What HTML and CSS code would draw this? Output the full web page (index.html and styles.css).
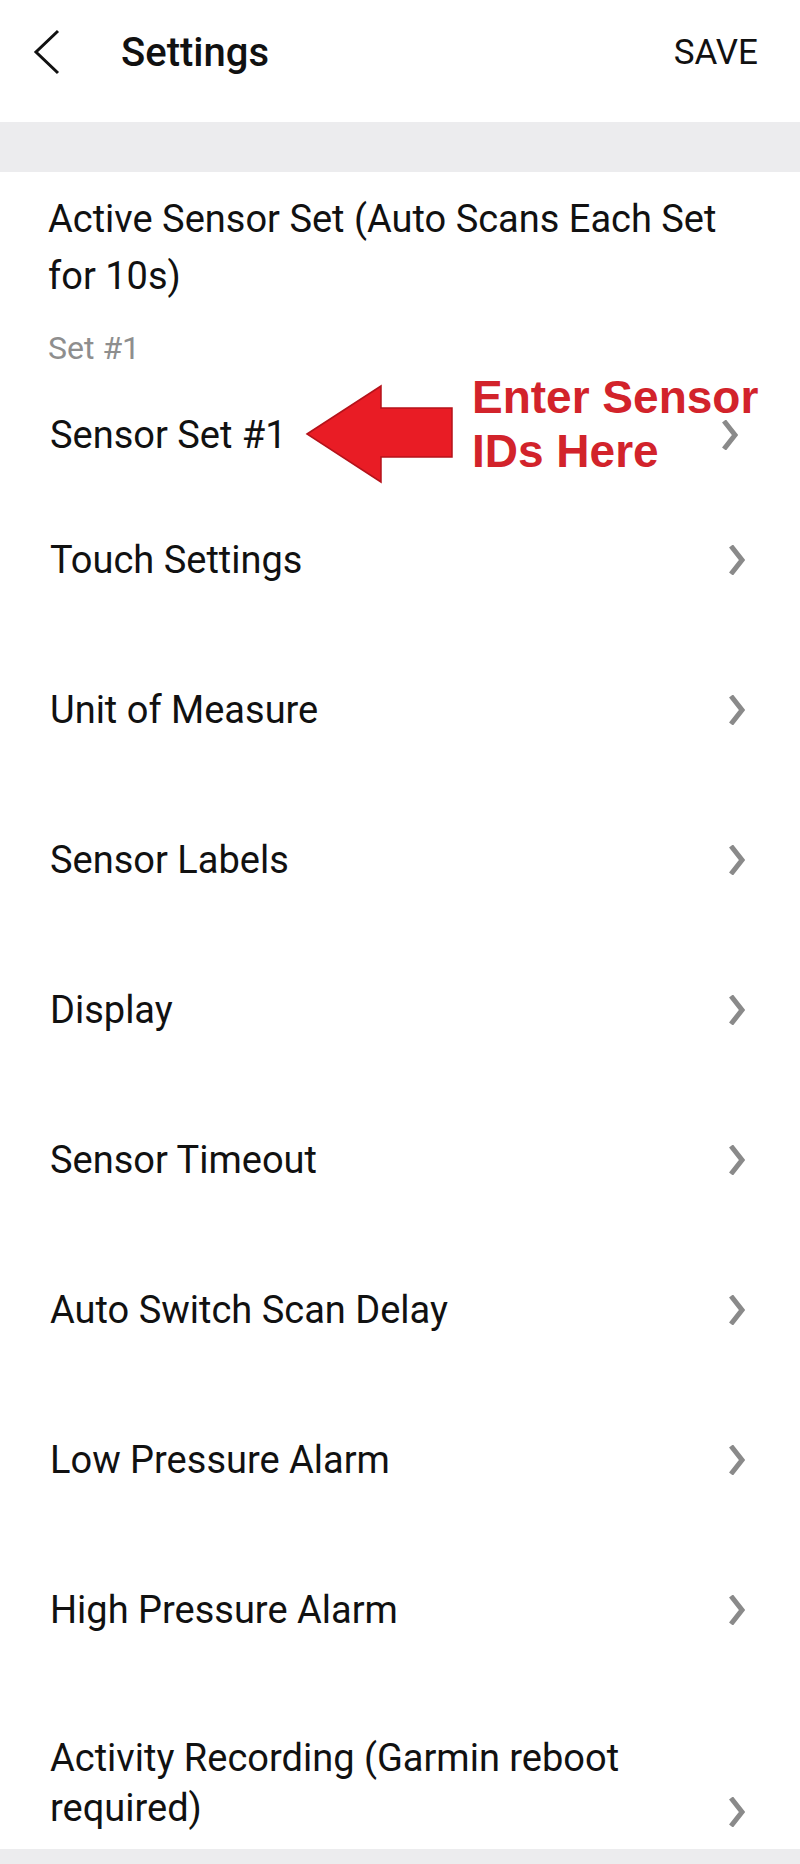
FILE: index.html
```html
<!DOCTYPE html>
<html lang="en">

<head>
    <meta charset="UTF-8">
    <meta name="viewport" content="width=device-width, initial-scale=1.0">
    <title>Settings</title>
    <link rel="stylesheet" href="styles.css">
</head>

<body>
    <div id="settings-screen">
        <header class="top-bar">
            <span class="back-button">
                <svg width="28" height="46" viewBox="0 0 28 46">
                    <polyline points="25,2 3,23 25,44" fill="none" stroke="#111" stroke-width="3" />
                </svg>
            </span>
            <h1 class="top-title">Settings</h1>
            <span class="save-button">SAVE</span>
        </header>

        <div class="divider-band"></div>

        <section class="settings-list">
            <div class="group-head">
                <div class="group-title">Active Sensor Set (Auto Scans Each Set for 10s)</div>
                <div class="group-value">Set #1</div>
            </div>

            <div class="setting-row setting-row-short">
                <span class="setting-label">Sensor Set #1</span>
                <svg class="row-arrow" width="16" height="30" viewBox="0 0 16 30">
                    <polyline points="2,1 13,15 2,29" fill="none" stroke="#8a8a8a" stroke-width="5" />
                </svg>
            </div>
            <div class="setting-row">
                <span class="setting-label">Touch Settings</span>
                <svg class="row-arrow" width="16" height="30" viewBox="0 0 16 30">
                    <polyline points="2,1 13,15 2,29" fill="none" stroke="#8a8a8a" stroke-width="5" />
                </svg>
            </div>
            <div class="setting-row">
                <span class="setting-label">Unit of Measure</span>
                <svg class="row-arrow" width="16" height="30" viewBox="0 0 16 30">
                    <polyline points="2,1 13,15 2,29" fill="none" stroke="#8a8a8a" stroke-width="5" />
                </svg>
            </div>
            <div class="setting-row">
                <span class="setting-label">Sensor Labels</span>
                <svg class="row-arrow" width="16" height="30" viewBox="0 0 16 30">
                    <polyline points="2,1 13,15 2,29" fill="none" stroke="#8a8a8a" stroke-width="5" />
                </svg>
            </div>
            <div class="setting-row">
                <span class="setting-label">Display</span>
                <svg class="row-arrow" width="16" height="30" viewBox="0 0 16 30">
                    <polyline points="2,1 13,15 2,29" fill="none" stroke="#8a8a8a" stroke-width="5" />
                </svg>
            </div>
            <div class="setting-row">
                <span class="setting-label">Sensor Timeout</span>
                <svg class="row-arrow" width="16" height="30" viewBox="0 0 16 30">
                    <polyline points="2,1 13,15 2,29" fill="none" stroke="#8a8a8a" stroke-width="5" />
                </svg>
            </div>
            <div class="setting-row">
                <span class="setting-label">Auto Switch Scan Delay</span>
                <svg class="row-arrow" width="16" height="30" viewBox="0 0 16 30">
                    <polyline points="2,1 13,15 2,29" fill="none" stroke="#8a8a8a" stroke-width="5" />
                </svg>
            </div>
            <div class="setting-row">
                <span class="setting-label">Low Pressure Alarm</span>
                <svg class="row-arrow" width="16" height="30" viewBox="0 0 16 30">
                    <polyline points="2,1 13,15 2,29" fill="none" stroke="#8a8a8a" stroke-width="5" />
                </svg>
            </div>
            <div class="setting-row">
                <span class="setting-label">High Pressure Alarm</span>
                <svg class="row-arrow" width="16" height="30" viewBox="0 0 16 30">
                    <polyline points="2,1 13,15 2,29" fill="none" stroke="#8a8a8a" stroke-width="5" />
                </svg>
            </div>
            <div class="setting-row setting-row-wrap">
                <span class="setting-label">Activity Recording (Garmin reboot required)</span>
                <svg class="row-arrow" width="16" height="30" viewBox="0 0 16 30">
                    <polyline points="2,1 13,15 2,29" fill="none" stroke="#8a8a8a" stroke-width="5" />
                </svg>
            </div>
        </section>

        <div class="divider-band divider-bottom"></div>

        <!-- nota em vermelho por cima da lista -->
        <div class="callout">
            <svg class="callout-arrow" width="152" height="100" viewBox="0 0 152 100">
                <polygon points="2,50 76,2 76,24 147,24 147,73 76,73 76,98" fill="#e91c25" stroke="#b5121a" stroke-width="1.5" />
            </svg>
            <div class="callout-text">Enter Sensor<br>IDs Here</div>
        </div>
    </div>
</body>

</html>
```

FILE: styles.css
```css
/* Tela de configuracoes */
body {
    font-family: Roboto, "Noto Sans", sans-serif;
    background-color: #ffffff;
    color: #111111;
    margin: 0;
    padding: 0;
}

#settings-screen {
    position: relative;
    width: 800px;
}

.top-bar {
    box-sizing: border-box;
    height: 122px;
    padding: 0 42px 18px 33px;
    display: flex;
    align-items: center;
}

.back-button {
    display: flex;
    width: 28px;
}

.top-title {
    margin: 0 0 0 60px;
    font-size: 40px;
    font-weight: 500;
    flex: 1;
}

.save-button {
    font-size: 35px;
    color: #111111;
}

.divider-band {
    height: 50px;
    background-color: #ececee;
}

.divider-bottom {
    height: 16px;
}

.group-head {
    padding: 19px 60px 0 48px;
}

.group-title {
    font-size: 38px;
    line-height: 57px;
}

.group-value {
    font-size: 32px;
    line-height: 40px;
    color: #8e8e8e;
    margin-top: 23px;
    margin-bottom: 17px;
}

.setting-row {
    box-sizing: border-box;
    height: 150px;
    padding: 0 55px 0 50px;
    display: flex;
    align-items: center;
    gap: 20px;
}

.setting-row-short {
    height: 100px;
}

.setting-row-short .row-arrow {
    margin-right: 7px;
}

.setting-row-wrap {
    height: 164px;
    padding-top: 48px;
    padding-bottom: 16px;
    align-items: flex-end;
}

.setting-label {
    flex: 1;
    font-size: 38px;
    line-height: 50px;
}

.row-arrow {
    flex-shrink: 0;
}

.setting-row-wrap .row-arrow {
    margin-bottom: 6px;
}

.callout {
    position: absolute;
    left: 305px;
    top: 370px;
    display: flex;
    align-items: flex-start;
}

.callout-arrow {
    margin-top: 14px;
}

.callout-text {
    margin-left: 15px;
    font-family: "Liberation Sans", Arial, sans-serif;
    font-weight: bold;
    font-size: 46px;
    line-height: 54px;
    color: #d2232b;
    white-space: nowrap;
}
```
